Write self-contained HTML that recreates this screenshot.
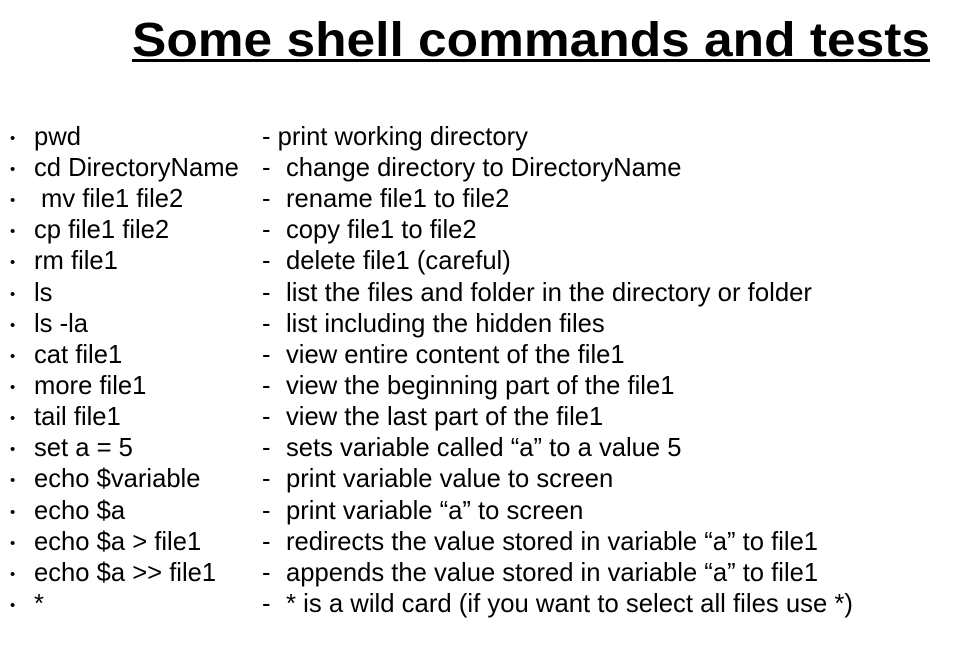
<!DOCTYPE html>
<html><head><meta charset="utf-8"><style>
html,body{margin:0;padding:0;background:#fff;}
svg{display:block;}
text{font-family:"Liberation Sans",Arial,sans-serif;fill:#000;}
.b{font-size:25.6px;}
.d{font-size:15px;}
</style></head><body>
<svg width="972" height="647" viewBox="0 0 972 647">
<text x="132" y="56" font-size="48" font-weight="bold" textLength="798" lengthAdjust="spacingAndGlyphs">Some shell commands and tests</text>
<rect x="132" y="59" width="798" height="3" fill="#000"/>
<g class="d">
<text x="10" y="143">•</text><text x="10" y="174">•</text><text x="10" y="205">•</text><text x="10" y="236">•</text>
<text x="10" y="267">•</text><text x="10" y="299">•</text><text x="10" y="330">•</text><text x="10" y="361">•</text>
<text x="10" y="392">•</text><text x="10" y="423">•</text><text x="10" y="454">•</text><text x="10" y="485">•</text>
<text x="10" y="517">•</text><text x="10" y="548">•</text><text x="10" y="579">•</text><text x="10" y="610">•</text>
</g>
<g class="b">
<text x="34" y="145">pwd</text><text x="262" y="145">- print working directory</text>
<text x="34" y="176">cd DirectoryName</text><text x="262" y="176">-</text><text x="286" y="176">change directory to DirectoryName</text>
<text x="41" y="207">mv file1 file2</text><text x="262" y="207">-</text><text x="286" y="207">rename file1 to file2</text>
<text x="34" y="238">cp file1 file2</text><text x="262" y="238">-</text><text x="286" y="238">copy file1 to file2</text>
<text x="34" y="269">rm file1</text><text x="262" y="269">-</text><text x="286" y="269">delete file1 (careful)</text>
<text x="34" y="301">ls</text><text x="262" y="301">-</text><text x="286" y="301" textLength="526" lengthAdjust="spacingAndGlyphs">list the files and folder in the directory or folder</text>
<text x="34" y="332">ls -la</text><text x="262" y="332">-</text><text x="286" y="332">list including the hidden files</text>
<text x="34" y="363">cat file1</text><text x="262" y="363">-</text><text x="286" y="363">view entire content of the file1</text>
<text x="34" y="394">more file1</text><text x="262" y="394">-</text><text x="286" y="394">view the beginning part of the file1</text>
<text x="34" y="425">tail file1</text><text x="262" y="425">-</text><text x="286" y="425">view the last part of the file1</text>
<text x="34" y="456">set a = 5</text><text x="262" y="456">-</text><text x="286" y="456">sets variable called “a” to a value 5</text>
<text x="34" y="487">echo $variable</text><text x="262" y="487">-</text><text x="286" y="487">print variable value to screen</text>
<text x="34" y="519">echo $a</text><text x="262" y="519">-</text><text x="286" y="519">print variable “a” to screen</text>
<text x="34" y="550">echo $a &gt; file1</text><text x="262" y="550">-</text><text x="286" y="550">redirects the value stored in variable “a” to file1</text>
<text x="34" y="581">echo $a &gt;&gt; file1</text><text x="262" y="581">-</text><text x="286" y="581">appends the value stored in variable “a” to file1</text>
<text x="34" y="612">*</text><text x="262" y="612">-</text><text x="286" y="612" textLength="567" lengthAdjust="spacingAndGlyphs">* is a wild card (if you want to select all files use *)</text>
</g>
</svg>
</body></html>
